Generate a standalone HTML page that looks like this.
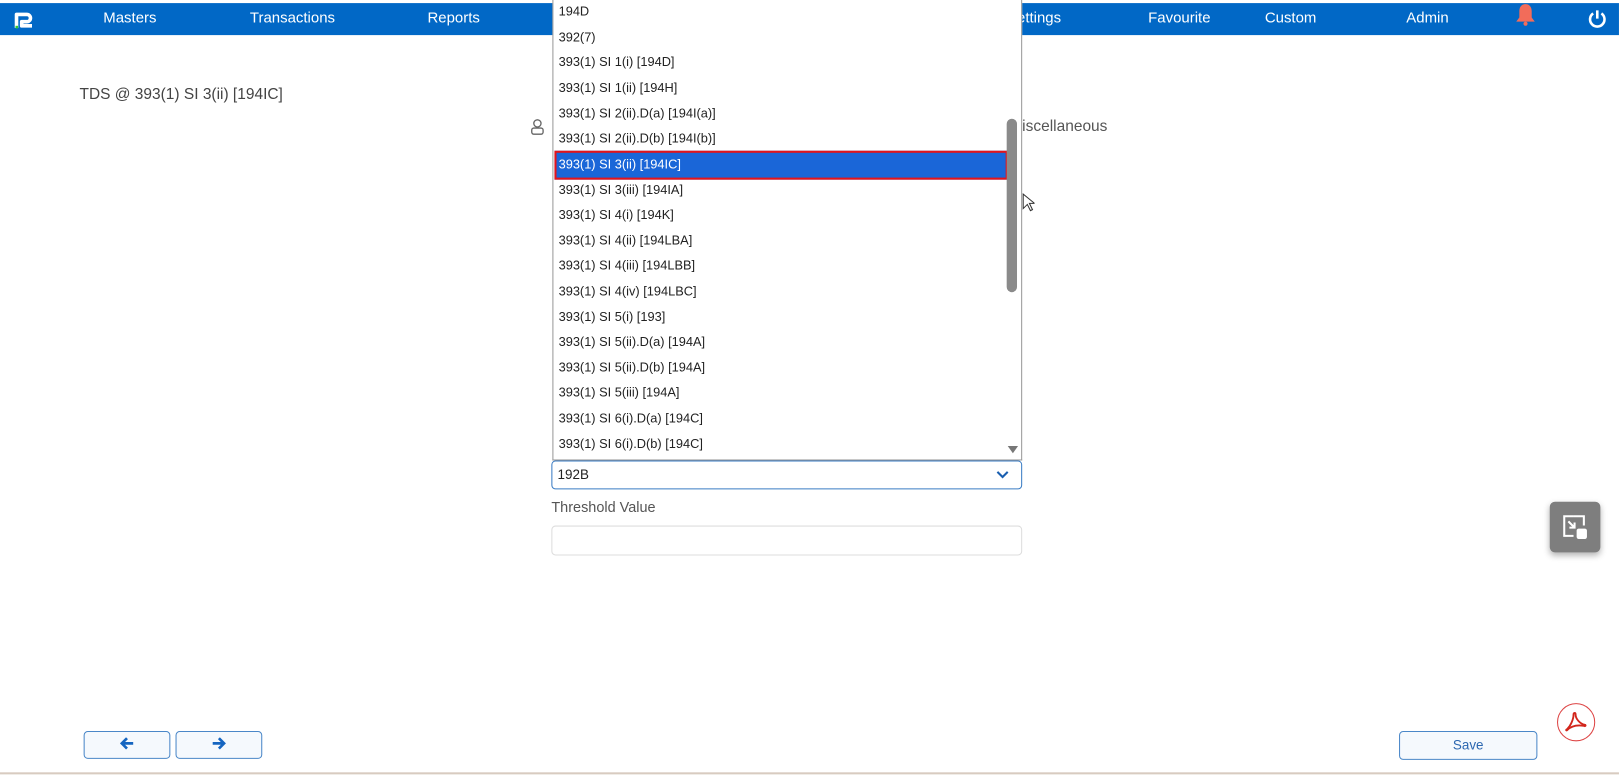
<!DOCTYPE html>
<html><head><meta charset="utf-8"><style>
*{margin:0;padding:0;box-sizing:border-box}
body{width:1619px;height:775px;background:#fff;font-family:"Liberation Sans",sans-serif;position:relative;overflow:hidden}
#w{position:absolute;left:0;top:0;width:1568px;height:751px;transform:scale(1.0325);transform-origin:0 0}
.nav{position:absolute;left:0;top:3px;width:1568px;height:31px;background:#0168c6}
.nav span{position:absolute;top:7px;color:#fff;font-size:14.5px}
.dd{position:absolute;left:535px;top:0;width:455px;height:446px;background:#fff;border:1px solid #999;border-top:none}
.it{position:absolute;left:5px;font-size:12.4px;color:#222;height:20px;line-height:20px}
.sel{position:absolute;left:1px;top:146px;width:439px;height:28px;background:#1a66d8;border:2px solid #e3141b}
.sb{position:absolute;left:975px;top:115px;width:10px;height:168px;background:#8a8a8a;border-radius:5px}
.btn{position:absolute;border:1px solid #4a87c8;border-radius:4px;background:#f5f9fd}
</style></head><body><div id="w">
<div class="nav">
<svg style="position:absolute;left:13px;top:7px" width="20" height="18" viewBox="0 0 20 18"><path d="M3 17V4h10a3.5 3.5 0 0 1 0 7H8v4h10" fill="none" stroke="#fff" stroke-width="3.5" stroke-linejoin="round"/><rect x="2" y="15" width="2.5" height="2.5" fill="#3c3"/></svg>
<span style="left:100px">Masters</span>
<span style="left:242px">Transactions</span>
<span style="left:414px">Reports</span>
<span style="left:985px">ettings</span>
<span style="left:1112px">Favourite</span>
<span style="left:1225px">Custom</span>
<span style="left:1362px">Admin</span>
<svg style="position:absolute;left:1467px;top:0px" width="21" height="22" viewBox="0 0 21 22"><path d="M10.5 1c-4 0-6 3-6 7v6l-3 4h18l-3-4V8c0-4-2-7-6-7z" fill="#f26c5a"/><circle cx="10.5" cy="20" r="2" fill="#f26c5a"/></svg>
<svg style="position:absolute;left:1538px;top:5px" width="18" height="20" viewBox="0 0 18 20"><path d="M5 5a7 7 0 1 0 8 0" fill="none" stroke="#fff" stroke-width="2.5"/><path d="M9 2v8" stroke="#fff" stroke-width="2.5"/></svg>
</div>
<div style="position:absolute;left:77px;top:83px;font-size:15px;color:#444">TDS @ 393(1) SI 3(ii) [194IC]</div>
<svg style="position:absolute;left:514px;top:115px" width="13" height="16" viewBox="0 0 13 16"><circle cx="6.5" cy="4.5" r="3.5" fill="none" stroke="#666" stroke-width="1.3"/><rect x="1" y="9" width="11" height="6" rx="2" fill="none" stroke="#666" stroke-width="1.3"/></svg>
<div style="position:absolute;left:990px;top:114px;font-size:15px;color:#555">iscellaneous</div>
<div class="dd">
<div class="sel"></div>
<div class="it" style="top:1px">194D</div>
<div class="it" style="top:26px">392(7)</div>
<div class="it" style="top:50px">393(1) SI 1(i) [194D]</div>
<div class="it" style="top:75px">393(1) SI 1(ii) [194H]</div>
<div class="it" style="top:100px">393(1) SI 2(ii).D(a) [194I(a)]</div>
<div class="it" style="top:124px">393(1) SI 2(ii).D(b) [194I(b)]</div>
<div class="it" style="top:149px;color:#fff">393(1) SI 3(ii) [194IC]</div>
<div class="it" style="top:174px">393(1) SI 3(iii) [194IA]</div>
<div class="it" style="top:198px">393(1) SI 4(i) [194K]</div>
<div class="it" style="top:223px">393(1) SI 4(ii) [194LBA]</div>
<div class="it" style="top:247px">393(1) SI 4(iii) [194LBB]</div>
<div class="it" style="top:272px">393(1) SI 4(iv) [194LBC]</div>
<div class="it" style="top:297px">393(1) SI 5(i) [193]</div>
<div class="it" style="top:321px">393(1) SI 5(ii).D(a) [194A]</div>
<div class="it" style="top:346px">393(1) SI 5(ii).D(b) [194A]</div>
<div class="it" style="top:370px">393(1) SI 5(iii) [194A]</div>
<div class="it" style="top:395px">393(1) SI 6(i).D(a) [194C]</div>
<div class="it" style="top:420px">393(1) SI 6(i).D(b) [194C]</div>
</div>
<div class="sb"></div>
<div style="position:absolute;left:976px;top:432px;width:0;height:0;border-left:5px solid transparent;border-right:5px solid transparent;border-top:7px solid #777"></div>
<div style="position:absolute;left:534px;top:446px;width:456px;height:28px;border:1px solid #3a7cc4;border-radius:4px"></div>
<div style="position:absolute;left:540px;top:452px;font-size:13px;color:#222">192B</div>
<svg style="position:absolute;left:965px;top:455px" width="12" height="9" viewBox="0 0 12 9"><path d="M1 2l5 5 5-5" fill="none" stroke="#1a5fb0" stroke-width="2"/></svg>
<div style="position:absolute;left:534px;top:483px;font-size:14px;color:#555">Threshold Value</div>
<div style="position:absolute;left:534px;top:509px;width:456px;height:29px;border:1px solid #ddd;border-radius:4px"></div>
<div style="position:absolute;left:1501px;top:486px;width:49px;height:49px;background:#7e7e7e;border-radius:5px;box-shadow:0 3px 6px rgba(0,0,0,.3)"></div>
<svg style="position:absolute;left:1512px;top:497px" width="28" height="28" viewBox="0 0 28 28"><path d="M12 3H3v19h9" fill="none" stroke="#fff" stroke-width="2"/><path d="M12 3h10v9" fill="none" stroke="#fff" stroke-width="2"/><path d="M7 8l6 6M13 9v5H8" fill="none" stroke="#fff" stroke-width="2"/><rect x="15" y="15" width="10" height="10" rx="2" fill="#fff"/></svg>
<div style="position:absolute;left:1508px;top:681px;width:37px;height:37px;border-radius:50%;border:1px solid #d44;background:#fff"></div>
<svg style="position:absolute;left:1514px;top:687px" width="24" height="24" viewBox="0 0 24 24"><path d="M4 19c3-3 6-9 6-14 0-2 2-2 2 0 0 4 4 9 9 10 1 0 1 2-1 1-6-1-12 0-16 4-1 1-2 0 0-1z" fill="none" stroke="#d2261c" stroke-width="1.8"/></svg>
<div class="btn" style="left:81px;top:708px;width:84px;height:27px"></div>
<div class="btn" style="left:170px;top:708px;width:84px;height:27px"></div>
<svg style="position:absolute;left:116px;top:714px" width="14" height="12" viewBox="0 0 14 12"><path d="M13 6H3M7 1L2 6l5 5" fill="none" stroke="#1565c0" stroke-width="2.6"/></svg>
<svg style="position:absolute;left:205px;top:714px" width="14" height="12" viewBox="0 0 14 12"><path d="M1 6h10M7 1l5 5-5 5" fill="none" stroke="#1565c0" stroke-width="2.6"/></svg>
<div class="btn" style="left:1355px;top:708px;width:134px;height:28px;text-align:center;line-height:26px;font-size:13px;color:#2c67b0">Save</div>
<div style="position:absolute;left:0;top:748px;width:1568px;height:2px;background:#d8cbc0"></div>
<svg style="position:absolute;left:990px;top:187px" width="12" height="18" viewBox="0 0 12 18"><path d="M1 1v14l4-4 3 6 2-1-3-6h5z" fill="#fff" stroke="#333" stroke-width="1"/></svg>
</div></body></html>
